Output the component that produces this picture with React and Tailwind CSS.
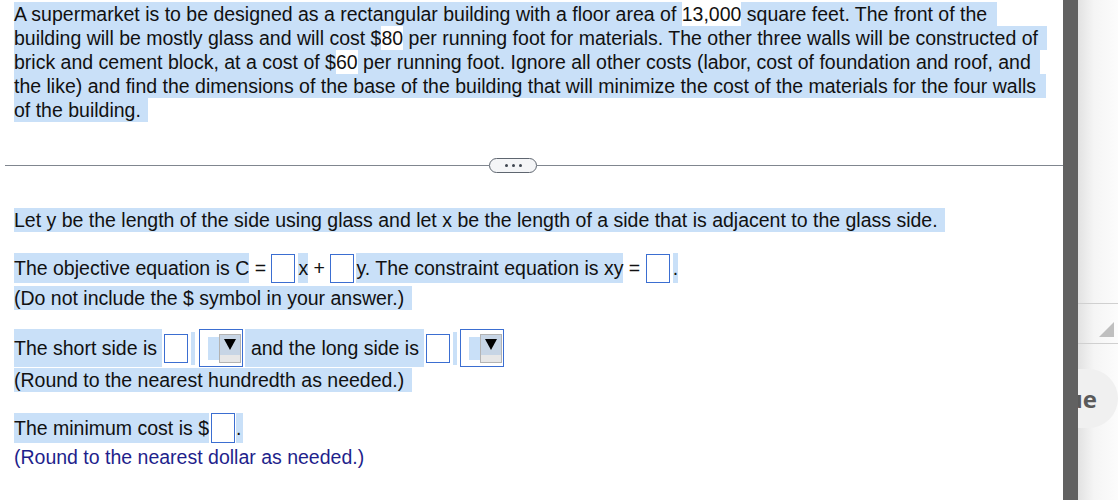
import React from 'react'

// selected (highlighted) text piece
const Hl = ({ children, className = '' }) => (
  <span className={`inline-block whitespace-pre bg-[#c9e0f8] ${className}`}>{children}</span>
)

const Plain = ({ children, className = '' }) => (
  <span className={`inline-block whitespace-pre ${className}`}>{children}</span>
)

const Box = ({ className = '' }) => (
  <span className={`inline-block w-[24px] h-[29px] border border-[#3b6ed1] bg-white shrink-0 ${className}`} />
)

const Strip = ({ className = '' }) => (
  <span className={`inline-block w-[4px] h-[33px] bg-[#c9e0f8] shrink-0 ${className}`} />
)

const Dropdown = ({ className = '' }) => (
  <span className={`flex items-center w-[44px] h-[38px] border border-[#3b6ed1] pl-[8px] shrink-0 ${className}`}>
    <span className="w-[11px] h-[23px] bg-[#c9e0f8]" />
    <span className="flex flex-col w-[22px] h-[29px] border border-[#b3b3b3]">
      <span className="flex-1 flex items-center justify-center bg-[#c7d5e5]">
        <svg width="12" height="11" viewBox="0 0 12 11">
          <polygon points="0,0 12,0 6,11" fill="#000" />
        </svg>
      </span>
      <span className="h-[7px] bg-[#e7e7e7]" />
    </span>
  </span>
)

const Line = ({ children }) => (
  <div className="flex h-[24px] leading-[24px] whitespace-nowrap">{children}</div>
)

export default function App() {
  return (
    <div className="flex w-[1118px] h-[500px] overflow-hidden bg-white font-['Liberation_Sans',Arial,sans-serif] text-[19.5px] text-[#111]">
      {/* Question column */}
      <div className="w-[1063px] shrink-0">
        <div className="pl-[14px] pt-[2px]">
          <Line>
            <Hl>A supermarket is to be designed as a rectangular building with a floor area of </Hl>
            <Plain className="bg-white">13,000</Plain>
            <Hl className="pr-[4px]"> square feet. The front of the </Hl>
          </Line>
          <Line>
            <Hl>building will be mostly glass and will cost $</Hl>
            <Plain className="bg-white">80</Plain>
            <Hl className="pr-[4px]"> per running foot for materials. The other three walls will be constructed of </Hl>
          </Line>
          <Line>
            <Hl>brick and cement block, at a cost of $</Hl>
            <Plain className="bg-white">60</Plain>
            <Hl className="pr-[4px]"> per running foot. Ignore all other costs (labor, cost of foundation and roof, and </Hl>
          </Line>
          <Line>
            <Hl className="pr-[4px]">the like) and find the dimensions of the base of the building that will minimize the cost of the materials for the four walls </Hl>
          </Line>
          <Line>
            <Hl className="pr-[2px]">of the building. </Hl>
          </Line>
        </div>

        {/* divider with expand pill */}
        <div className="flex items-center h-[15px] mt-[36px] pl-[5px]">
          <div className="w-[484px] h-px bg-[#80868f]" />
          <div className="flex items-center justify-center gap-[4px] w-[48px] h-[15px] rounded-full border border-[#5f6670] bg-[#f4f5f7]">
            <span className="w-[3px] h-[3px] rounded-full bg-[#3f4650]" />
            <span className="w-[3px] h-[3px] rounded-full bg-[#3f4650]" />
            <span className="w-[3px] h-[3px] rounded-full bg-[#3f4650]" />
          </div>
          <div className="flex-1 h-px bg-[#80868f]" />
        </div>

        <div className="pl-[14px]">
          <div className="mt-[35px]">
            <Line>
              <Hl className="pr-[2px]">Let y be the length of the side using glass and let x be the length of a side that is adjacent to the glass side. </Hl>
            </Line>
          </div>

          <div className="flex items-center h-[30px] mt-[21px] whitespace-nowrap">
            <Hl className="h-[30px] leading-[30px]">The objective equation is C</Hl>
            <Plain className="h-[30px] leading-[30px]"> = </Plain>
            <Box className="mr-[3px]" />
            <Hl className="h-[30px] leading-[30px]">x</Hl>
            <Plain className="h-[30px] leading-[30px]"> + </Plain>
            <Box className="mr-[2px]" />
            <Hl className="h-[30px] leading-[30px]">y. The constraint equation is xy</Hl>
            <Plain className="h-[30px] leading-[30px]"> = </Plain>
            <Box className="mr-[3px]" />
            <Hl className="h-[30px] leading-[30px]">.</Hl>
          </div>

          <div className="mt-[3px]">
            <Line>
              <Hl className="pr-[2px]">(Do not include the $ symbol in your answer.) </Hl>
            </Line>
          </div>

          <div className="flex items-center h-[38px] mt-[19px] whitespace-nowrap">
            <Hl className="h-[38px] leading-[38px]">The short side is </Hl>
            <Box className="ml-[2px]" />
            <Strip className="ml-[3px]" />
            <Dropdown className="ml-[4px]" />
            <Hl className="h-[38px] leading-[38px] ml-[2px]"> and the long side is </Hl>
            <Box className="ml-[2px]" />
            <Strip className="ml-[3px]" />
            <Dropdown className="ml-[3px]" />
          </div>

          <div className="mt-[1px]">
            <Line>
              <Hl className="pr-[2px]">(Round to the nearest hundredth as needed.) </Hl>
            </Line>
          </div>

          <div className="flex items-center h-[30px] mt-[21px] whitespace-nowrap">
            <Hl className="h-[30px] leading-[30px]">The minimum cost is $</Hl>
            <Box className="ml-[2px] h-[30px]" />
            <Hl className="h-[30px] leading-[30px] ml-[1px] pr-[2px]">.</Hl>
          </div>

          <div className="mt-[2px]">
            <Line>
              <span className="text-[#1f1f8c]">(Round to the nearest dollar as needed.)</span>
            </Line>
          </div>
        </div>
      </div>

      {/* scrollbar divider */}
      <div className="w-[15px] shrink-0 bg-[#616161]" />

      {/* side panel peeking in */}
      <div className="w-[40px] min-w-0 shrink-0 overflow-hidden flex flex-col bg-linear-to-r from-[#e2e2e2] via-[#f5f5f5] via-40% to-[#fcfcfc]">
        <div className="h-[303px] shrink-0" />
        <div className="flex items-end justify-end h-[41px] shrink-0 border-y border-[#d0d0d0] pb-[6px] pr-[4px]">
          <svg width="15" height="15" viewBox="0 0 15 15">
            <polygon points="15,0 15,15 0,15" fill="#bfbfbf" />
          </svg>
        </div>
        <div className="mt-[25px] flex items-center justify-end w-[40px] h-[59px] shrink-0 overflow-hidden rounded-r-[30px] bg-[#f0f0f0] pr-[21px] font-['Open_Sans',sans-serif] font-bold text-[24px] text-[#5a5a5a] whitespace-nowrap">
          <span className="shrink-0">Continue</span>
        </div>
      </div>
    </div>
  )
}
